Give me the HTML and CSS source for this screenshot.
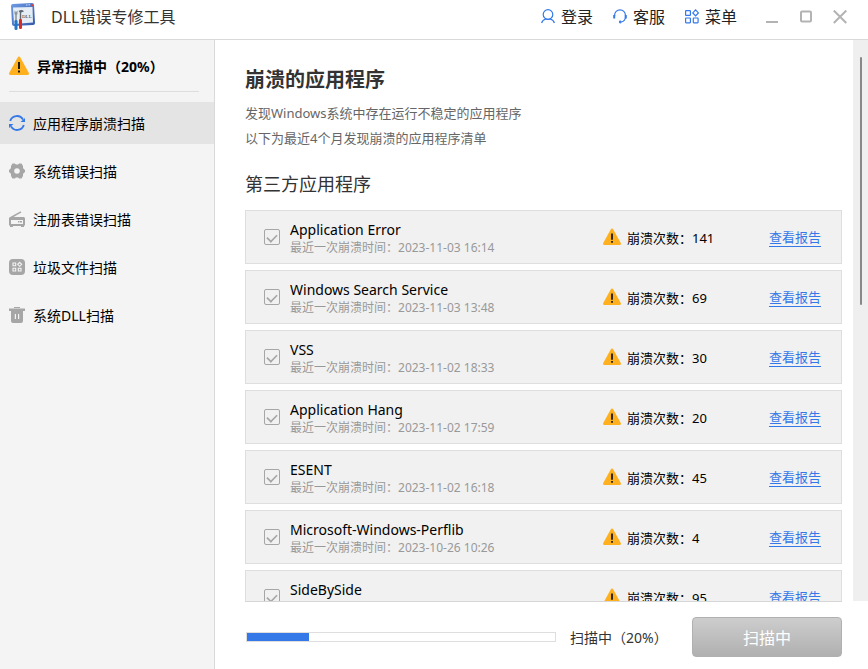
FILE: index.html
```
<!DOCTYPE html>
<html lang="zh-CN">
<head>
    <meta charset="UTF-8">
    <meta name="viewport" content="width=device-width, initial-scale=1.0">
    <title>DLL错误专修工具</title>
    <link rel="stylesheet" href="styles.css">
</head>
<body>
    <!-- Shared icons -->
    <svg class="sprite" aria-hidden="true">
        <symbol id="icon-warning" viewBox="0 0 20 20">
            <path d="M8.4 2Q10 -.8 11.6 2L19.6 16.5Q20.8 19 18.2 19H1.8Q-.8 19 .4 16.5Z" fill="#ffb01f"/>
            <path d="M9 6h2v7H9zM9 14.5h2v2H9z" fill="#1c1c1c"/>
        </symbol>
    </svg>

    <header class="titlebar">
        <svg class="logo" viewBox="0 0 26 28">
            <defs>
                <linearGradient id="logo-frame" x1="0" y1="0" x2="1" y2="1">
                    <stop offset="0" stop-color="#6f9be6"/>
                    <stop offset="1" stop-color="#3358a8"/>
                </linearGradient>
            </defs>
            <path d="M3 1L22 0Q24 0 24 2L25 20Q25 22 23 22L4 23Q2 23 2 21L1 3Q1 1 3 1Z" fill="url(#logo-frame)"/>
            <path d="M3 4.500L22.500 4L23 19.500L4 21Z" fill="#e6edf5"/>
            <path d="M16 2h1.500M18.500 1.800H20" stroke="#d5e3ff"/>
            <path d="M21 1.200h2v2h-2z" fill="#d8403c"/>
            <path d="M4.500 7.500L6 9L7.500 7.500V11L6.800 12V18H5.200V12L4.500 11Z" fill="#8d969e"/>
            <path d="M8.500 8Q12 6 14 8.500L11.200 9.500V17H9.800V9.500Z" fill="#5e6870"/>
            <text class="logo-text" x="12" y="15">DLL</text>
            <rect x="4.500" y="17" width="3" height="10" rx="1.300" fill="#2377c9"/>
            <rect x="9" y="16" width="3" height="10" rx="1.300" fill="#d62c27"/>
        </svg>
        <h1 class="app-name">DLL错误专修工具</h1>

        <nav class="actions">
            <button type="button" class="action">
                <svg class="icon-line" viewBox="0 0 14 15">
                    <circle cx="7" cy="5.500" r="4.800"/>
                    <path d="M.6 14Q1.500 10.800 5 10Q7 10.500 9 10Q12.500 10.800 13.400 14"/>
                </svg>
                登录
            </button>
            <button type="button" class="action">
                <svg class="icon-line" viewBox="0 0 14 15">
                    <path d="M1.600 7V6.200A5.400 5.400 0 0 1 12.400 6.200V8.500Q12 12 8.500 13"/>
                    <path d="M1.200 6v3.500M12.800 6v3.500" stroke-width="2"/>
                    <circle cx="7.300" cy="13" r=".8"/>
                </svg>
                客服
            </button>
            <button type="button" class="action">
                <svg class="icon-line" viewBox="0 0 14 15">
                    <rect x=".6" y="1.600" width="4.800" height="4.800" rx=".5"/>
                    <path d="M10.600 .9L13.400 3.900L10.600 6.900L7.800 3.900Z"/>
                    <rect x=".6" y="9" width="4.800" height="4.800" rx=".5"/>
                    <rect x="8.300" y="9" width="4.800" height="4.800" rx=".5"/>
                </svg>
                菜单
            </button>
        </nav>

        <div class="window-controls">
            <button type="button" class="window-btn" aria-label="最小化">
                <svg viewBox="0 0 14 14"><path d="M1 12h12"/></svg>
            </button>
            <button type="button" class="window-btn" aria-label="最大化">
                <svg viewBox="0 0 14 14"><rect x="2" y="1.500" width="10" height="10" rx="1"/></svg>
            </button>
            <button type="button" class="window-btn" aria-label="关闭">
                <svg viewBox="0 0 14 14"><path d="M.8 .5l12.500 12.500M13.300 .5L.8 13"/></svg>
            </button>
        </div>
    </header>

    <div class="layout">
        <aside class="sidebar">
            <div class="scan-status">
                <svg class="status-icon"><use href="#icon-warning"/></svg>
                异常扫描中（20%）
            </div>
            <nav class="menu">
                <a href="#" class="menu-item active">
                    <svg viewBox="0 0 16 16">
                        <path d="M1.200 6A7 7 0 0 1 14 4.600M14.800 10A7 7 0 0 1 2 11.400" fill="none" stroke="#3579e8" stroke-width="1.900"/>
                        <path d="M16 3v4h-4.500zM0 13V9h4.500z" fill="#3579e8"/>
                    </svg>
                    应用程序崩溃扫描
                </a>
                <a href="#" class="menu-item">
                    <svg viewBox="0 0 16 16">
                        <path fill-rule="evenodd" d="M3.500 .5h2.300L7 1.500h2L10.200 .5h2.300L14 3v1.500l.5 1.200L16 7v2l-1.500 1.300-.5 1.200V13l-1.500 2.500h-2.300L9 14.500H7l-1.200 1H3.500L2 13v-1.500l-.5-1.200L0 9V7l1.500-1.300L2 4.500V3zM8 5.200a2.800 2.800 0 1 0 0 5.600a2.800 2.800 0 1 0 0-5.600z"/>
                    </svg>
                    系统错误扫描
                </a>
                <a href="#" class="menu-item">
                    <svg viewBox="0 0 16 16">
                        <path d="M2 6.500L12 .8" fill="none" stroke="#a6a6a6" stroke-width="1.500"/>
                        <path fill-rule="evenodd" d="M1 6h14l1 1v7l-1 1v1h-3v-1H4v1H1v-1l-1-1V7zM2 9v4h12V9z"/>
                        <path d="M9 10h1.500v1.500H9zM11 10h2v1.500h-2z"/>
                    </svg>
                    注册表错误扫描
                </a>
                <a href="#" class="menu-item">
                    <svg viewBox="0 0 16 16">
                        <rect width="16" height="16" rx="4"/>
                        <g fill="none" stroke="#f4f4f4" stroke-width="1.100">
                            <path d="M4 4h2.700v2.700H4zM4 9.300h2.700V12H4zM9.300 9.300H12V12H9.300zM10.700 3.300l2 2-2 2-2-2z"/>
                        </g>
                    </svg>
                    垃圾文件扫描
                </a>
                <a href="#" class="menu-item">
                    <svg viewBox="0 0 16 16">
                        <path d="M5 0h6v1H5zM0 1.500h16V4H0z"/>
                        <path fill-rule="evenodd" d="M2 4h12v10q0 2-2 2H4q-2 0-2-2zM5.800 7v5H7V7zM9 7v5h1.200V7z"/>
                    </svg>
                    系统DLL扫描
                </a>
            </nav>
        </aside>

        <main class="main">
            <div class="scroll-area">
                <section class="content">
                    <h2 class="title">崩溃的应用程序</h2>
                    <p class="intro">发现Windows系统中存在运行不稳定的应用程序<br>以下为最近4个月发现崩溃的应用程序清单</p>
                    <h3 class="subtitle">第三方应用程序</h3>

                    <ul class="crash-list">
                        <li class="crash-row">
                            <input type="checkbox" id="app-1" class="check" checked>
                            <label class="app" for="app-1">Application Error<small>最近一次崩溃时间：<time>2023-11-03 16:14</time></small></label>
                            <span class="count"><svg><use href="#icon-warning"/></svg>崩溃次数：141</span>
                            <a href="#" class="report">查看报告</a>
                        </li>
                        <li class="crash-row">
                            <input type="checkbox" id="app-2" class="check" checked>
                            <label class="app" for="app-2">Windows Search Service<small>最近一次崩溃时间：<time>2023-11-03 13:48</time></small></label>
                            <span class="count"><svg><use href="#icon-warning"/></svg>崩溃次数：69</span>
                            <a href="#" class="report">查看报告</a>
                        </li>
                        <li class="crash-row">
                            <input type="checkbox" id="app-3" class="check" checked>
                            <label class="app" for="app-3">VSS<small>最近一次崩溃时间：<time>2023-11-02 18:33</time></small></label>
                            <span class="count"><svg><use href="#icon-warning"/></svg>崩溃次数：30</span>
                            <a href="#" class="report">查看报告</a>
                        </li>
                        <li class="crash-row">
                            <input type="checkbox" id="app-4" class="check" checked>
                            <label class="app" for="app-4">Application Hang<small>最近一次崩溃时间：<time>2023-11-02 17:59</time></small></label>
                            <span class="count"><svg><use href="#icon-warning"/></svg>崩溃次数：20</span>
                            <a href="#" class="report">查看报告</a>
                        </li>
                        <li class="crash-row">
                            <input type="checkbox" id="app-5" class="check" checked>
                            <label class="app" for="app-5">ESENT<small>最近一次崩溃时间：<time>2023-11-02 16:18</time></small></label>
                            <span class="count"><svg><use href="#icon-warning"/></svg>崩溃次数：45</span>
                            <a href="#" class="report">查看报告</a>
                        </li>
                        <li class="crash-row">
                            <input type="checkbox" id="app-6" class="check" checked>
                            <label class="app" for="app-6">Microsoft-Windows-Perflib<small>最近一次崩溃时间：<time>2023-10-26 10:26</time></small></label>
                            <span class="count"><svg><use href="#icon-warning"/></svg>崩溃次数：4</span>
                            <a href="#" class="report">查看报告</a>
                        </li>
                        <li class="crash-row">
                            <input type="checkbox" id="app-7" class="check" checked>
                            <label class="app" for="app-7">SideBySide</label>
                            <span class="count"><svg><use href="#icon-warning"/></svg>崩溃次数：95</span>
                            <a href="#" class="report">查看报告</a>
                        </li>
                    </ul>
                </section>
                <div class="scrollbar"><div class="thumb"></div></div>
            </div>

            <footer class="footer">
                <progress class="progress" id="scan-progress" value="20" max="100"></progress>
                <label class="progress-label" for="scan-progress">扫描中（20%）</label>
                <button type="button" class="scan-btn">扫描中</button>
            </footer>
        </main>
    </div>
</body>
</html>
```

FILE: styles.css
```
* {
    box-sizing: border-box;
}

body {
    margin: 0;
    height: 100vh;
    display: flex;
    flex-direction: column;
    font-family: "Noto Sans", "Noto Sans CJK SC", sans-serif;
    font-size: 14px;
    color: #000;
    background-color: #fff;
}

h1, h2, h3, p, ul {
    margin: 0;
    padding: 0;
    font-weight: normal;
}

button {
    font-family: inherit;
    padding: 0;
    border: none;
    background: none;
    cursor: pointer;
}

svg {
    flex-shrink: 0;
}

.sprite {
    display: none;
}

/* Title bar */
.titlebar {
    display: flex;
    align-items: center;
    flex-shrink: 0;
    height: 40px;
    padding: 0 21px 6px 10px;
    border-bottom: 1px solid #d9d9d9;
}

.logo {
    width: 26px;
    height: 28px;
}

.logo-text {
    font-family: "Liberation Serif", serif;
    font-size: 5px;
    fill: #333;
}

.app-name {
    margin-left: 15px;
    font-size: 16px;
    line-height: 24px;
    color: #333;
}

.actions {
    display: flex;
    gap: 20px;
    margin-left: auto;
}

.action {
    display: flex;
    align-items: center;
    gap: 6px;
    font-size: 16px;
    line-height: 24px;
    color: #222;
}

.icon-line {
    width: 14px;
    height: 15px;
    fill: none;
    stroke: #3579e8;
    stroke-width: 1.2;
}

.window-controls {
    display: flex;
    gap: 20px;
    margin-left: 28px;
}

.window-btn {
    display: flex;
}

.window-btn svg {
    width: 14px;
    height: 14px;
    fill: none;
    stroke: #b3b3b3;
    stroke-width: 2;
}

.layout {
    flex: 1;
    display: flex;
    min-height: 0;
}

/* Sidebar */
.sidebar {
    flex: 0 0 215px;
    background-color: #f4f4f4;
    border-right: 1px solid #d9d9d9;
}

.scan-status {
    display: flex;
    align-items: center;
    gap: 8px;
    height: 52px;
    margin: 0 15px 10px 9px;
    border-bottom: 1px solid #dedede;
    font-weight: bold;
}

.status-icon {
    width: 20px;
    height: 20px;
}

.menu {
    display: flex;
    flex-direction: column;
    gap: 6px;
}

.menu-item {
    display: flex;
    align-items: center;
    gap: 8px;
    height: 42px;
    padding-left: 9px;
    color: #000;
    text-decoration: none;
}

.menu-item svg {
    width: 16px;
    height: 16px;
    fill: #a6a6a6;
}

.menu-item.active {
    background-color: #e4e4e4;
}

/* Main area */
.main {
    flex: 1;
    display: flex;
    flex-direction: column;
    min-width: 0;
}

.scroll-area {
    flex: 1;
    display: flex;
    min-height: 0;
    overflow: hidden;
}

.content {
    flex: 1;
    padding: 25px 11px 0 30px;
}

.title {
    font-size: 20px;
    line-height: 30px;
    font-weight: bold;
    color: #333;
}

.intro {
    margin-top: 6px;
    font-size: 13px;
    line-height: 25px;
    color: #666;
}

.subtitle {
    margin: 21px 0 14px;
    font-size: 18px;
    line-height: 24px;
    color: #333;
}

.crash-list {
    display: flex;
    flex-direction: column;
    gap: 6px;
    list-style: none;
}

.crash-row {
    display: grid;
    grid-template-columns: 16px 1fr 156px auto;
    column-gap: 10px;
    align-items: center;
    height: 54px;
    padding: 0 20px 0 18px;
    background-color: #f1f1f1;
    border: 1px solid #dedede;
}

.check {
    appearance: none;
    display: flex;
    justify-content: center;
    width: 16px;
    height: 16px;
    margin: 0;
    border: 1px solid #a6a6a6;
    border-radius: 2px;
}

.check:checked::after {
    content: "";
    width: 10px;
    height: 6px;
    margin-top: 3px;
    border: solid #a6a6a6;
    border-width: 0 0 2px 2px;
    transform: rotate(-45deg) scale(0.8);
}

.app {
    height: 34px;
    font-size: 14px;
    line-height: 20px;
}

.app small {
    display: block;
    font-size: 12px;
    line-height: 16px;
    color: #999;
}

.count {
    display: flex;
    align-items: center;
    gap: 6px;
    font-size: 13px;
}

.count svg {
    width: 18px;
    height: 18px;
}

.report {
    font-size: 13px;
    line-height: 18px;
    color: #3579e8;
    border-bottom: 1px solid #3579e8;
    text-decoration: none;
}

.scrollbar {
    flex: 0 0 15px;
    padding-top: 17px;
    background-color: #efefef;
}

.thumb {
    width: 2px;
    height: 248px;
    margin: 0 auto;
    background-color: #888;
    border-radius: 1px;
}

/* Footer */
.footer {
    display: flex;
    align-items: center;
    gap: 14px;
    margin: 0 26px 0 30px;
    padding: 15px 0 12px;
    border-top: 1px solid #d6d6d6;
}

.progress {
    appearance: none;
    flex: 1;
    min-width: 0;
    height: 10px;
    margin-left: 1px;
    border: 1px solid #dedede;
    background-color: #fff;
}

.progress::-webkit-progress-bar {
    background-color: #fff;
}

.progress::-webkit-progress-value {
    background-color: #3579e8;
}

.progress-label {
    flex: 0 0 108px;
    color: #333;
}

.scan-btn {
    width: 150px;
    height: 40px;
    font-size: 16px;
    color: #fff;
    background: linear-gradient(#cdcdcd, #b0b0b0);
    border: 1px solid #b0b0b0;
    border-radius: 4px;
}
```
